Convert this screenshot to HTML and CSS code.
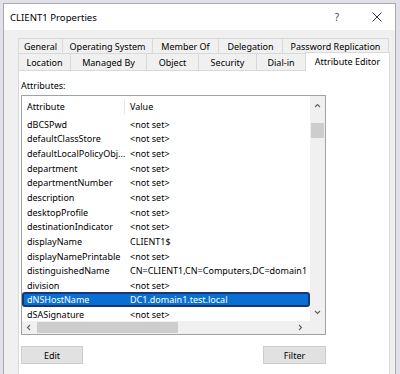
FILE: index.html
```html
<!DOCTYPE html>
<html>
<head>
<meta charset="utf-8">
<link rel="stylesheet" href="styles.css">
</head>
<body>
<div class="window">
  <div class="titlebar">
    <span class="title">CLIENT1 Properties</span>
    <span class="help">?</span>
    <span class="close"><svg width="10" height="10" viewBox="0 0 10 10"><path d="M0.5 0.5L9.5 9.5M9.5 0.5L0.5 9.5" stroke="#333" stroke-width="1" fill="none"/></svg></span>
  </div>
  <div class="body">
    <div class="tabs">
      <div class="tabrow back">
        <div class="tab t-general">General</div>
        <div class="tab t-os">Operating System</div>
        <div class="tab t-member">Member Of</div>
        <div class="tab t-deleg">Delegation</div>
        <div class="tab t-pwd">Password Replication</div>
      </div>
      <div class="tabrow front">
        <div class="tab t-loc">Location</div>
        <div class="tab t-managed">Managed By</div>
        <div class="tab t-object">Object</div>
        <div class="tab t-security">Security</div>
        <div class="tab t-dial">Dial-in</div>
        <div class="tab t-attr active">Attribute Editor</div>
      </div>
    </div>
    <div class="panel">
      <div class="label">Attributes:</div>
      <div class="listbox">
        <div class="listarea">
          <div class="lhead"><span class="c1">Attribute</span><span class="c2">Value</span></div>
          <div class="row"><span class="c1">dBCSPwd</span><span class="c2">&lt;not set&gt;</span></div>
          <div class="row"><span class="c1">defaultClassStore</span><span class="c2">&lt;not set&gt;</span></div>
          <div class="row"><span class="c1">defaultLocalPolicyObj...</span><span class="c2">&lt;not set&gt;</span></div>
          <div class="row"><span class="c1">department</span><span class="c2">&lt;not set&gt;</span></div>
          <div class="row"><span class="c1">departmentNumber</span><span class="c2">&lt;not set&gt;</span></div>
          <div class="row"><span class="c1">description</span><span class="c2">&lt;not set&gt;</span></div>
          <div class="row"><span class="c1">desktopProfile</span><span class="c2">&lt;not set&gt;</span></div>
          <div class="row"><span class="c1">destinationIndicator</span><span class="c2">&lt;not set&gt;</span></div>
          <div class="row"><span class="c1">displayName</span><span class="c2">CLIENT1$</span></div>
          <div class="row"><span class="c1">displayNamePrintable</span><span class="c2">&lt;not set&gt;</span></div>
          <div class="row"><span class="c1">distinguishedName</span><span class="c2">CN=CLIENT1,CN=Computers,DC=domain1</span></div>
          <div class="row"><span class="c1">division</span><span class="c2">&lt;not set&gt;</span></div>
          <div class="row sel"><span class="c1">dNSHostName</span><span class="c2">DC1.domain1.test.local</span></div>
          <div class="row"><span class="c1">dSASignature</span><span class="c2">&lt;not set&gt;</span></div>
        </div>
        <div class="vscroll">
          <span class="arrow"><svg width="7" height="5" viewBox="0 0 7 5"><path d="M1 4L3.5 1.5L6 4" stroke="#606060" stroke-width="1.1" fill="none"/></svg></span>
          <span class="vthumb"></span>
          <span class="arrow down"><svg width="7" height="5" viewBox="0 0 7 5"><path d="M1 1L3.5 3.5L6 1" stroke="#606060" stroke-width="1.1" fill="none"/></svg></span>
        </div>
        <div class="hscroll">
          <span class="harrow"><svg width="5" height="7" viewBox="0 0 5 7"><path d="M4 1L1.5 3.5L4 6" stroke="#606060" stroke-width="1.1" fill="none"/></svg></span>
          <span class="hthumb"></span>
          <span class="harrow right"><svg width="5" height="7" viewBox="0 0 5 7"><path d="M1 1L3.5 3.5L1 6" stroke="#606060" stroke-width="1.1" fill="none"/></svg></span>
        </div>
        <div class="corner"></div>
      </div>
      <div class="buttons">
        <span class="btn btn-edit">Edit</span>
        <span class="btn btn-filter">Filter</span>
      </div>
    </div>
  </div>
</div>
</body>
</html>
```

FILE: styles.css
```css
* { box-sizing: border-box; }
html, body { margin: 0; padding: 0; }
body {
  width: 400px;
  height: 374px;
  overflow: hidden;
  background: #e2e0e8;
  font-family: "Noto Sans", "Open Sans", sans-serif;
  font-size: 9px;
  color: #000;
  padding: 3px 0 0 3px;
}
.window {
  width: 393px;
  height: 380px;
  border: 1px solid #a9a9a9;
  background: #f0f0f0;
  display: flex;
  flex-direction: column;
}
.titlebar {
  height: 26px;
  background: #fff;
  display: flex;
  align-items: center;
  padding: 0 8px 0 6px;
  flex: none;
}
.title { font-size: 9.6px; }
.help {
  margin-left: auto;
  width: 20px;
  text-align: center;
  font-size: 10px;
  color: #444;
}
.close {
  width: 20px;
  margin-left: 20px;
  display: flex;
  justify-content: center;
}
.body {
  padding: 8px 5px 0 14px;
  flex: 1;
  display: flex;
  flex-direction: column;
}
.tabs { display: flex; flex-direction: column; }
.tabrow { display: flex; }
.tab {
  border: 1px solid #d9d9d9;
  border-bottom: none;
  margin-right: -1px;
  display: flex;
  align-items: center;
  justify-content: center;
  white-space: nowrap;
  background: #f0f0f0;
}
.tab:last-child { margin-right: 0; }
.back .tab { height: 15px; }
.front .tab { height: 17px; }
.t-general { width: 45px; }
.t-os { width: 91px; }
.t-member { width: 67px; }
.t-deleg { width: 65px; }
.t-pwd { width: 107px; }
.t-loc { width: 53px; }
.t-managed { width: 77px; }
.t-object { width: 53px; }
.t-security { width: 59px; }
.t-dial { width: 50px; }
.t-attr { width: 85px; }
.tab.active {
  background: #fff;
  height: 19px;
  margin-top: -1px;
  margin-bottom: -1px;
  padding-bottom: 2px;
  position: relative;
  z-index: 1;
}
.panel {
  flex: 1;
  background: #fff;
  border: 1px solid #d9d9d9;
  padding: 9px 0 0 2px;
}
.label { height: 12px; line-height: 12px; }
.listbox {
  margin-top: 3px;
  width: 305px;
  height: 240px;
  border: 1px solid #9ea3aa;
  display: grid;
  grid-template-columns: 288px 15px;
  grid-template-rows: 225px 13px;
}
.listarea { overflow: hidden; }
.lhead, .row {
  display: flex;
  white-space: nowrap;
}
.lhead { height: 21.7px; align-items: center; }
.lhead .c1 { border-right: 1px solid #e5e5e5; height: 15px; line-height: 15px; }
.row { height: 14.67px; line-height: 14.67px; }
.c1 { width: 103px; padding-left: 5px; flex: none; overflow: hidden; }
.c2 { padding-left: 5px; }
.row.sel {
  height: 15px;
  line-height: 11px;
  margin: -1.5px 0 1.17px;
  background: #0a6fd5;
  border: 2px solid #17386e;
  border-radius: 3px;
  color: #fff;
}
.row.sel .c1 { width: 101px; padding-left: 3px; }
.vscroll {
  background: #f0f0f0;
  display: flex;
  flex-direction: column;
  align-items: center;
}
.arrow { height: 18px; display: flex; align-items: center; justify-content: center; }
.arrow.down { margin-top: auto; }
.vthumb { width: 13px; height: 15px; margin-top: 9px; background: #cdcdcd; }
.hscroll {
  background: #f0f0f0;
  display: flex;
  align-items: center;
}
.harrow { width: 12px; height: 13px; display: flex; align-items: center; justify-content: center; flex: none; }
.harrow.right { margin-left: auto; margin-right: 4px; }
.hthumb { width: 141px; height: 11px; margin-left: 3px; background: #cdcdcd; }
.corner { background: #f0f0f0; }
.buttons {
  width: 305px;
  margin-top: 11px;
  display: flex;
  justify-content: space-between;
}
.btn {
  height: 18px;
  background: #e1e1e1;
  border: 1px solid #cccccc;
  display: flex;
  align-items: center;
  justify-content: center;
}
.btn-edit { width: 62px; }
.btn-filter { width: 63px; }
```
